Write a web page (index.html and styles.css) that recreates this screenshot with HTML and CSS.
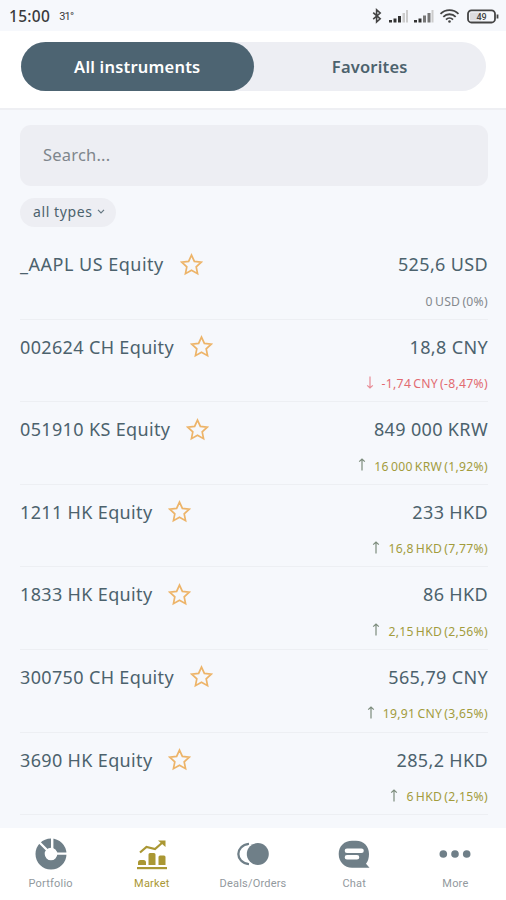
FILE: index.html
```html
<!DOCTYPE html>
<html lang="en">
<head>
  <meta charset="UTF-8">
  <title>Market</title>
  <link rel="stylesheet" href="styles.css">
</head>
<body>

  <svg class="sprite">
    <symbol id="star" viewBox="0 0 24 24">
      <path d="M12 2.2l3 6.5 7.2.9-5.3 4.9 1.4 7.1L12 18.1l-6.3 3.5 1.4-7.1-5.3-4.9 7.2-.9z" fill="none" stroke="currentColor" stroke-width="1.8"/>
    </symbol>
    <symbol id="arrow" viewBox="0 0 8 13">
      <path d="M4 12.5V1.2M1.2 3.6L4 1l2.8 2.6" fill="none" stroke="currentColor" stroke-width="1.2"/>
    </symbol>
  </svg>

  <div class="status">
    <span class="time">15:00</span>
    <span class="temp">31°</span>
    <svg class="status-icons" width="128" height="16" viewBox="0 0 128 16">
      <path d="M2.2 4.6l7 6.2-3.6 3.2V1.8l3.6 3.2-7 6.2" fill="none" stroke="#444" stroke-width="1.6"/>
      <g fill="#333">
        <path d="M18 12h3v2.5h-3zM22.5 10.5h3v4h-3zM27 8h3v6.5h-3z"/>
        <path d="M43 12h3v2.5h-3zM47.5 10.5h3v4h-3z"/>
      </g>
      <path d="M52 7.5h3v7h-3zM56.500 5h3v9.5h-3z" fill="#777"/>
      <path d="M31.5 5h2.500v9.5h-2.500zM35 2h2v12.5h-2zM60.5 2h2v12.5h-2z" fill="#ccc"/>
      <g fill="none" stroke="#444" stroke-width="1.8">
        <path d="M69.500 5.800a13 13 0 0 1 18 0M72.300 8.800a8.800 8.800 0 0 1 12.400 0M75 11.600a5 5 0 0 1 7 0"/>
        <rect x="97" y="2.300" width="27" height="12.200" rx="3.500"/>
        <path d="M126.500 6.500v4"/>
      </g>
      <circle cx="78.500" cy="13.500" r="1.300" fill="#444"/>
      <rect x="99" y="4.500" width="11" height="8" fill="#dcdcdf"/>
      <text x="110.500" y="12" text-anchor="middle" class="battery">49</text>
    </svg>
  </div>

  <header>
    <div class="tabs">
      <div class="tab active">All instruments</div>
      <div class="tab">Favorites</div>
    </div>
  </header>

  <main>
    <div class="search">Search...</div>
    <div class="filter">
      <span>all types</span>
      <svg width="8" height="5" viewBox="0 0 8 5"><path d="M1 .8l3 3 3-3" fill="none" stroke="#647680" stroke-width="1.2"/></svg>
    </div>

    <div class="list">
      <div class="row">
        <div class="line"><span class="name wide">_AAPL US Equity</span><svg class="star"><use href="#star"/></svg><span class="price">525,6 USD</span></div>
        <div class="change">0 USD (0%)</div>
      </div>
      <div class="row">
        <div class="line"><span class="name">002624 CH Equity</span><svg class="star"><use href="#star"/></svg><span class="price">18,8 CNY</span></div>
        <div class="change down"><svg class="arrow"><use href="#arrow"/></svg>-1,74 CNY (-8,47%)</div>
      </div>
      <div class="row">
        <div class="line"><span class="name">051910 KS Equity</span><svg class="star"><use href="#star"/></svg><span class="price">849 000 KRW</span></div>
        <div class="change up"><svg class="arrow"><use href="#arrow"/></svg>16 000 KRW (1,92%)</div>
      </div>
      <div class="row">
        <div class="line"><span class="name">1211 HK Equity</span><svg class="star"><use href="#star"/></svg><span class="price">233 HKD</span></div>
        <div class="change up"><svg class="arrow"><use href="#arrow"/></svg>16,8 HKD (7,77%)</div>
      </div>
      <div class="row">
        <div class="line"><span class="name">1833 HK Equity</span><svg class="star"><use href="#star"/></svg><span class="price">86 HKD</span></div>
        <div class="change up"><svg class="arrow"><use href="#arrow"/></svg>2,15 HKD (2,56%)</div>
      </div>
      <div class="row">
        <div class="line"><span class="name">300750 CH Equity</span><svg class="star"><use href="#star"/></svg><span class="price">565,79 CNY</span></div>
        <div class="change up"><svg class="arrow"><use href="#arrow"/></svg>19,91 CNY (3,65%)</div>
      </div>
      <div class="row">
        <div class="line"><span class="name">3690 HK Equity</span><svg class="star"><use href="#star"/></svg><span class="price">285,2 HKD</span></div>
        <div class="change up"><svg class="arrow"><use href="#arrow"/></svg>6 HKD (2,15%)</div>
      </div>
    </div>
  </main>

  <nav>
    <div class="item">
      <svg width="32" height="32" viewBox="0 0 32 32">
        <circle cx="16" cy="16" r="10.9" fill="none" stroke="currentColor" stroke-width="9.2"/>
        <path d="M17.200 13V0M13 13L3.500 3.500M18 15.600h14" stroke="#fff" stroke-width="2.4"/>
      </svg>
      <span>Portfolio</span>
    </div>
    <div class="item current">
      <svg width="32" height="32" viewBox="0 0 32 32" fill="currentColor">
        <path d="M1 29h30v2.2H1z"/>
        <path d="M2 27v-2.500q0-2.500 2.500-2.500h3q2.500 0 2.500 2.500V27zM12.500 27V16.500q0-1.500 1.500-1.500h4q1.500 0 1.500 1.500V27zM22.500 27v-8q0-1.500 1.500-1.500h4q1.500 0 1.500 1.500v8z"/>
        <path d="M4 14.500l6.500-5.500 8.500 2 7.500-6.500" fill="none" stroke="currentColor" stroke-width="2.2"/>
        <path d="M22 2.500h7.500v6.500z"/>
      </svg>
      <span>Market</span>
    </div>
    <div class="item">
      <svg width="32" height="32" viewBox="0 0 32 32">
        <path d="M12 5.8C-2.200 7.500-2.200 24.500 12 26.200" fill="none" stroke="currentColor" stroke-width="2.3"/>
        <circle cx="20.800" cy="16" r="12.8" fill="#fff"/>
        <circle cx="20.800" cy="16" r="11" fill="currentColor"/>
      </svg>
      <span>Deals/Orders</span>
    </div>
    <div class="item">
      <svg width="32" height="32" viewBox="0 0 32 32">
        <path d="M14 2.700h4C26 2.700 31 8.500 31 16c0 4-1 7.200-3 9.700l3.500 4H14C6.500 29.700.700 24 .700 16S6.500 2.700 14 2.700z" fill="currentColor"/>
        <path d="M9 12.700h14.500M9 19.200h10" stroke="#fff" stroke-width="4.6" stroke-linecap="round"/>
      </svg>
      <span>Chat</span>
    </div>
    <div class="item">
      <svg width="32" height="32" viewBox="0 0 32 32" fill="currentColor">
        <circle cx="4.3" cy="16" r="3.8"/><circle cx="16" cy="16" r="3.8"/><circle cx="27.7" cy="16" r="3.8"/>
      </svg>
      <span>More</span>
    </div>
  </nav>

</body>
</html>
```
FILE: styles.css
```css
body {
  margin: 0;
  height: 900px;
  display: flex;
  flex-direction: column;
  overflow: hidden;
  background: #f6f8fc;
  font-family: "Noto Sans", "Open Sans", sans-serif;
  color: #4c626d;
}

.sprite {
  display: none;
}

.status {
  display: flex;
  align-items: center;
  height: 31px;
  box-sizing: border-box;
  padding: 1px 7px 0 9px;
  color: #3a3a3c;
}

.time {
  font-size: 15.5px;
  font-weight: 500;
  letter-spacing: 0.3px;
}

.temp {
  font-family: Roboto, sans-serif;
  font-size: 11px;
  letter-spacing: -0.8px;
  margin-left: 9px;
}

.status-icons {
  margin-left: auto;
}

.battery {
  font: 500 9px Roboto, sans-serif;
  fill: #444;
}

header {
  height: 79px;
  box-sizing: border-box;
  padding: 11px 20px 0 21px;
  background: #fff;
  border-bottom: 2px solid #eeeff3;
}

.tabs {
  display: flex;
  height: 49px;
  border-radius: 25px;
  background: #edeef3;
}

.tab {
  flex: 1;
  line-height: 50px;
  text-align: center;
  border-radius: 25px;
  font-size: 16.5px;
  font-weight: 600;
  letter-spacing: 0.2px;
}

.tab.active {
  background: #4d6472;
  color: #fff;
}

main {
  flex: 1;
  padding: 15px 18px 0 20px;
}

.search {
  height: 61px;
  line-height: 60px;
  padding-left: 23px;
  border-radius: 11px;
  background: #edeef3;
  color: #7f868c;
  font-size: 16.5px;
  letter-spacing: 0.2px;
}

.filter {
  display: flex;
  align-items: center;
  justify-content: space-between;
  width: 96px;
  height: 29px;
  line-height: 27px;
  box-sizing: border-box;
  padding: 0 11px 2px 13px;
  margin-top: 12px;
  border-radius: 15px;
  background: #edeef3;
  font-size: 14px;
  letter-spacing: 0.6px;
}

.list {
  padding-top: 10px;
}

.row {
  height: 82.6px;
  box-sizing: border-box;
  padding-top: 15px;
  border-bottom: 1px solid #edeff3;
}

.line {
  display: flex;
  align-items: center;
  height: 24px;
  font-size: 18px;
}

.name {
  letter-spacing: 0.35px;
}

.name.wide {
  letter-spacing: 0.5px;
}

.star {
  width: 23px;
  height: 23px;
  margin-left: 16px;
  color: #edb469;
}

.price {
  margin-left: auto;
  letter-spacing: 0.35px;
}

.change {
  display: flex;
  align-items: center;
  justify-content: flex-end;
  height: 20px;
  margin-top: 15px;
  font-size: 12.2px;
  letter-spacing: 0.3px;
  word-spacing: -1.4px;
  color: #84898e;
}

.arrow {
  width: 8px;
  height: 13px;
  margin: -3px 8px 0 0;
  color: #7c8c7c;
}

.up {
  color: #a39c3c;
}

.down {
  color: #e26b71;
}

.down .arrow {
  color: #e88c96;
  transform: rotate(180deg);
}

nav {
  display: flex;
  height: 72px;
  background: #fff;
}

.item {
  flex: 1;
  display: flex;
  flex-direction: column;
  align-items: center;
  padding-top: 10px;
  color: #6f7f88;
}

.item span {
  margin-top: 6px;
  font: 11px/16px Roboto, sans-serif;
  letter-spacing: 0.2px;
  color: #92999e;
}

.item.current,
.item.current span {
  color: #aa9733;
}
```
